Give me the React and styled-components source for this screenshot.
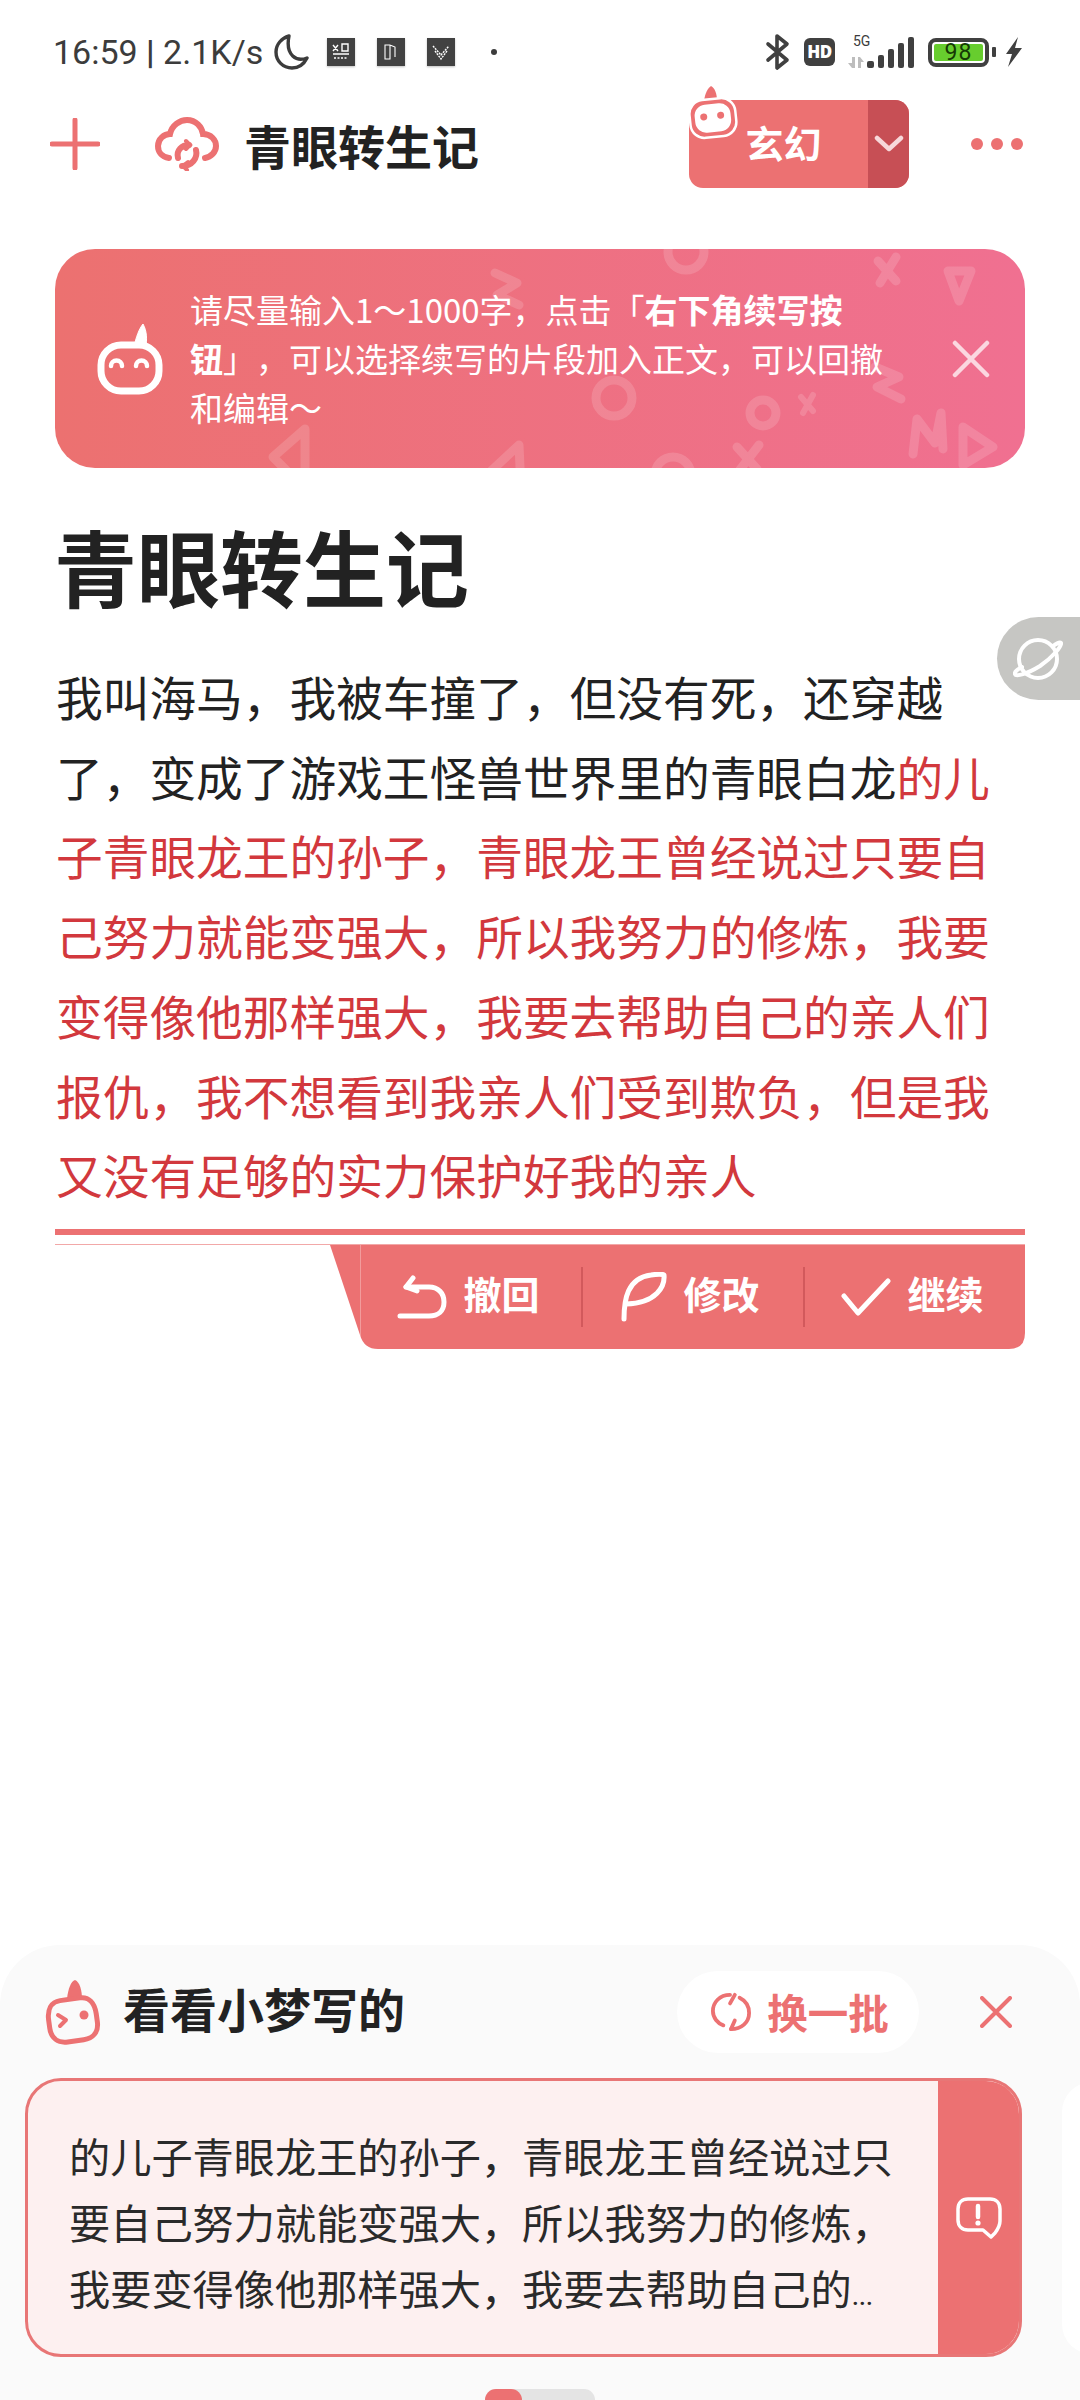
import React from 'react';
import styled, { createGlobalStyle } from 'styled-components';

const coral = '#ec7172';
const sans = '"Noto Sans CJK SC", "Noto Sans", sans-serif';

const GlobalStyle = createGlobalStyle`
    html, body { margin: 0; padding: 0; background: #fff; }
    body { font-family: ${sans}; color: #222; text-spacing-trim: space-all; }
`;

const Page = styled.div`
    position: relative;
    width: 1080px;
    height: 2400px;
    display: flex;
    flex-direction: column;
    overflow: hidden;
    background: #fff;
`;

/* status bar */
const StatusBar = styled.div`
    height: 96px;
    padding: 4px 57px 0 53px;
    display: flex;
    align-items: center;
    color: #3c3c3c;
`;
const Clock = styled.span`
    font: 400 34px/1 Roboto, sans-serif;
    white-space: nowrap;
    b { font-weight: 700; }
`;
const MoonWrap = styled.div`
    width: 36px;
    height: 36px;
    margin-left: 10px;
`;
const NotifyGroup = styled.div`
    display: flex;
    align-items: center;
    gap: 22px;
    margin-left: 18px;
`;
const NotifyIcon = styled.div`
    width: 28px;
    height: 28px;
    background: #424242;
    box-shadow: 0 1px 2px rgba(0, 0, 0, 0.25);
    display: flex;
    align-items: center;
    justify-content: center;
`;
const NotifyDot = styled.div`
    width: 6px;
    height: 6px;
    border-radius: 50%;
    background: #3c3c3c;
    margin-left: 14px;
`;
const SystemGroup = styled.div`
    margin-left: auto;
    display: flex;
    align-items: center;
`;
const HdBadge = styled.div`
    width: 31px;
    height: 28px;
    margin-left: 13px;
    border-radius: 6px;
    background: #404040;
    color: #fff;
    font: 800 17px/28px "Open Sans", sans-serif;
    text-align: center;
    letter-spacing: -0.5px;
`;
const SignalWrap = styled.div`
    position: relative;
    width: 68px;
    height: 34px;
    margin-left: 12px;
`;
const FiveG = styled.span`
    position: absolute;
    left: 6px;
    top: -1px;
    font: 400 14px/14px Roboto, sans-serif;
    color: #3c3c3c;
`;
const Battery = styled.div`
    width: 61px;
    height: 29px;
    margin-left: 13px;
    box-sizing: border-box;
    border: 4px solid #404040;
    border-radius: 8px;
    padding: 2px;
    display: flex;
`;
const BatteryFill = styled.div`
    flex: 1;
    border-radius: 2px;
    background: #67cd2e;
    color: #163a05;
    font: 400 23px/17px Roboto, sans-serif;
    text-align: center;
    letter-spacing: 1px;
`;
const BatteryTip = styled.div`
    width: 4px;
    height: 10px;
    margin-left: 3px;
    border-radius: 1px;
    background: #404040;
`;
const BoltWrap = styled.div`
    width: 18px;
    height: 30px;
    margin-left: 9px;
`;

/* top bar */
const Header = styled.div`
    height: 88px;
    display: flex;
    align-items: center;
    padding-left: 50px;
    padding-right: 57px;
`;
const CloudWrap = styled.div`
    width: 64px;
    height: 54px;
    margin-left: 55px;
`;
const DocName = styled.h2`
    margin: 0 0 0 25px;
    font: 700 47px/1 ${sans};
    color: #222;
    white-space: nowrap;
`;
const GenreButton = styled.div`
    position: relative;
    width: 220px;
    height: 88px;
    margin-left: auto;
    border-radius: 14px;
    background: ${coral};
    display: flex;
`;
const GenreLabel = styled.div`
    flex: 1;
    padding-left: 10px;
    color: #fff;
    font: 700 38px/84px ${sans};
    text-align: center;
`;
const GenreArrow = styled.div`
    width: 41px;
    background: #c74f55;
    border-radius: 0 14px 14px 0;
    display: flex;
    align-items: center;
    justify-content: center;
`;
const GenreBot = styled.div`
    position: absolute;
    left: -1px;
    top: -15px;
    width: 50px;
    height: 56px;
`;
const MoreDots = styled.div`
    display: flex;
    gap: 8px;
    margin-left: 62px;
`;
const MoreDot = styled.span`
    width: 12px;
    height: 12px;
    border-radius: 50%;
    background: ${coral};
`;

/* tip banner */
const Banner = styled.div`
    position: relative;
    height: 219px;
    margin: 61px 55px 0;
    border-radius: 40px;
    overflow: hidden;
    background: linear-gradient(90deg, #ec7170 0%, #f07091 100%);
    display: flex;
    align-items: center;
`;
const BannerDecor = styled.svg`
    position: absolute;
    inset: 0;
`;
const BannerBot = styled.div`
    position: relative;
    width: 66px;
    height: 72px;
    margin: 0 0 0 42px;
    flex: none;
`;
const BannerText = styled.p`
    position: relative;
    width: 704px;
    margin: 0 0 0 27px;
    color: #fff;
    font: 400 33px/49px ${sans};
    strong { font-weight: 700; }
`;
const BannerClose = styled.div`
    position: relative;
    width: 38px;
    height: 38px;
    margin-left: 58px;
`;

/* document */
const DocTitle = styled.h1`
    margin: 47px 0 0 54px;
    font: 700 83px/100px ${sans};
    color: #222;
`;
const Body = styled.p`
    width: 970px;
    margin: 41px 0 0 56px;
    font: 400 46.7px/79.7px ${sans};
    color: #222;
`;
const Generated = styled.span`
    color: #d2383d;
`;
const ThickRule = styled.div`
    height: 6px;
    margin: 15px 55px 0;
    background: ${coral};
`;
const ThinRule = styled.div`
    height: 1px;
    margin: 9px 55px 0;
    background: #f2a8a8;
`;
const Toolbar = styled.div`
    width: 695px;
    height: 104px;
    margin: 0 55px 0 auto;
    padding-left: 30px;
    box-sizing: border-box;
    background: ${coral};
    clip-path: path('M0 0H695V88Q695 104 679 104H48Q34 104 30 90Z');
    display: flex;
    align-items: center;
`;
const ToolbarInner = styled.div`
    flex: 1;
    height: 100%;
    border-left: 1px solid rgba(255, 255, 255, 0.3);
    display: flex;
    align-items: center;
`;
const ToolButton = styled.div`
    flex: 1;
    display: flex;
    align-items: center;
    justify-content: center;
    gap: 16px;
    padding-right: 5px;
    color: #fff;
`;
const ToolLabel = styled.span`
    font: 700 38px/1 ${sans};
    margin-bottom: 8px;
`;
const ToolDivider = styled.div`
    width: 2px;
    height: 60px;
    background: rgba(190, 70, 75, 0.55);
`;

/* planet tab */
const PlanetTab = styled.div`
    position: absolute;
    right: 0;
    top: 617px;
    width: 83px;
    height: 83px;
    border-radius: 42px 0 0 42px;
    background: #c6c6c3;
    display: flex;
    align-items: center;
    padding-left: 16px;
    box-sizing: border-box;
`;

/* bottom sheet */
const Sheet = styled.div`
    margin-top: auto;
    height: 455px;
    flex: none;
    box-sizing: border-box;
    border-radius: 60px 60px 0 0;
    background: #fafafa;
    padding-top: 26px;
    overflow: hidden;
    display: flex;
    flex-direction: column;
`;
const SheetHeader = styled.div`
    height: 82px;
    flex: none;
    display: flex;
    align-items: center;
    padding: 0 68px 0 45px;
`;
const SheetTitle = styled.h3`
    margin: 0 0 10px 22px;
    font: 700 47px/1 ${sans};
    color: #222;
`;
const BatchPill = styled.div`
    width: 242px;
    height: 82px;
    margin-left: auto;
    border-radius: 41px;
    background: #fff;
    display: flex;
    align-items: center;
    justify-content: center;
    gap: 16px;
    padding-left: 4px;
    box-sizing: border-box;
    color: ${coral};
    font: 700 40.5px/1 ${sans};
`;
const SheetClose = styled.div`
    width: 32px;
    height: 32px;
    margin-left: 61px;
`;
const CardRow = styled.div`
    flex: none;
    display: flex;
    gap: 40px;
    margin-top: 25px;
    padding-left: 25px;
    align-items: center;
    overflow: hidden;
`;
const Card = styled.div`
    flex: none;
    width: 997px;
    height: 279px;
    box-sizing: border-box;
    border: 3px solid #e87676;
    border-radius: 36px;
    background: #fdf0f0;
    overflow: hidden;
    display: flex;
`;
const CardText = styled.p`
    flex: 1;
    margin: 0;
    padding: 41px 24px 0 41px;
    font: 400 41.2px/66px ${sans};
    color: #2a2a2a;
`;
const Dots = styled.span`
    font: 400 30px/1 Roboto, sans-serif;
    letter-spacing: -1px;
`;
const CardSide = styled.div`
    flex: none;
    width: 81px;
    background: ${coral};
    display: flex;
    align-items: center;
    justify-content: center;
`;
const NextCard = styled.div`
    flex: none;
    width: 200px;
    height: 272px;
    border-radius: 30px;
    background: #fff;
`;
const Pager = styled.div`
    flex: none;
    width: 110px;
    height: 22px;
    margin: 32px auto 0;
    border-radius: 11px;
    background: #e4e4e4;
`;
const PagerThumb = styled.div`
    width: 37px;
    height: 100%;
    border-radius: 11px;
    background: ${coral};
`;

function PlusIcon() {
    return (
        <svg width="50" height="52" viewBox="0 0 50 52" fill="none" stroke={coral} strokeWidth="5" strokeLinecap="round">
            <path d="M25 2V50M2 26H48" />
        </svg>
    );
}

function CloudIcon() {
    return (
        <svg width="64" height="54" viewBox="0 0 64 54" fill="none" stroke={coral} strokeWidth="6" strokeLinecap="round">
            <path d="M14 41C6 40 3 34 3 29C3 22 9 17 15 17C17 8 25 3 32 3C41 3 47 10 48 17C56 17 61 23 61 29C61 35 56 40 50 41" />
            <path d="M23 41C21 33 27 28 34 28" />
            <path d="M41 33C43 41 37 49 27 49" />
            <path d="M31 24L35 28L31 32M33 45L28 49L32 53" strokeWidth="4" />
        </svg>
    );
}

function BannerDecorations() {
    const mark = { fill: 'none', stroke: 'rgba(255,255,255,0.15)', strokeLinecap: 'round', strokeLinejoin: 'round' };
    return (
        <BannerDecor width="970" height="219" viewBox="0 0 970 219">
            <g {...mark} strokeWidth="9">
                <circle cx="631" cy="3" r="18" />
                <path d="M823 12L841 32M841 8L825 34" />
                <path d="M893 22H916L904 52Z" />
                <path d="M440 24L462 34L442 46L464 56" />
                <path d="M820 118L844 128L822 138L846 150" />
                <circle cx="559" cy="149" r="18" />
                <circle cx="708" cy="164" r="13" />
                <path d="M746 148L758 162M758 146L748 164" strokeWidth="6" />
                <path d="M858 205L862 170L880 194L886 164L888 200" />
                <path d="M908 178L938 198L908 216Z" />
                <path d="M250 180L218 208L250 240Z" />
                <path d="M464 196L436 222L466 240Z" />
                <circle cx="618" cy="226" r="18" />
                <path d="M682 198L702 220M704 196L684 222" />
            </g>
        </BannerDecor>
    );
}

function HappyBot() {
    return (
        <svg width="66" height="72" viewBox="0 0 66 72" fill="none" stroke="#fff" strokeLinecap="round">
            <path d="M37 24C39 14 42 6 46 1C50 8 50 16 49 24Z" fill="#fff" strokeWidth="1" />
            <rect x="4" y="22" width="58" height="46" rx="20" strokeWidth="7" />
            <path d="M14 43A5.5 5.5 0 0 1 25 43M39 43A5.5 5.5 0 0 1 50 43" strokeWidth="4.5" />
        </svg>
    );
}

function GenreBotIcon() {
    return (
        <svg width="50" height="56" viewBox="0 0 50 56" style={{ display: 'block' }}>
            <path d="M16 16C17 8 20 3 23 1C27 3 29 9 29 16Z" fill={coral} />
            <g transform="rotate(-6 25 34)">
                <rect x="2" y="14" width="46" height="38" rx="14" fill={coral} stroke="#fff" strokeWidth="2.5" />
                <rect x="7" y="19" width="36" height="28" rx="11" fill="#fff" />
                <circle cx="16" cy="31" r="3.5" fill={coral} />
                <circle cx="33" cy="31" r="3.5" fill={coral} />
            </g>
        </svg>
    );
}

function WinkBot() {
    return (
        <svg width="56" height="66" viewBox="0 0 56 66" fill="none" stroke={coral} strokeLinecap="round" strokeLinejoin="round" style={{ flex: 'none' }}>
            <path d="M22 20C23 10 26 2 30 1C35 3 37 12 37 20Z" fill={coral} stroke="none" />
            <path transform="rotate(-8 28 42)" d="M18 20H38C47 20 52 27 52 38V46C52 57 45 62 36 62H20C10 62 4 56 4 46V38C4 27 9 20 18 20Z" strokeWidth="5" />
            <path d="M13 36L21 41L15 47" strokeWidth="4" />
            <circle cx="39" cy="36" r="4.5" fill={coral} stroke="none" />
        </svg>
    );
}

function App() {
    return (
        <Page>
            <GlobalStyle />
            <StatusBar>
                <Clock>16:59 <b>|</b> 2.1K/s</Clock>
                <MoonWrap>
                    <svg width="36" height="36" viewBox="0 0 36 36" fill="none" stroke="#3c3c3c" strokeWidth="3.4">
                        <path d="M16 2C9 4 3 10 3 18C3 27 10 34 19 34C26 34 31 30 34 24C24 28 12 22 16 2Z" strokeLinejoin="round" />
                    </svg>
                </MoonWrap>
                <NotifyGroup>
                    <NotifyIcon>
                        <svg width="20" height="20" viewBox="0 0 20 20" fill="none" stroke="#fff" strokeWidth="1.4">
                            <path d="M2 3L7 9M7 3L2 9M11 2H17V9H11ZM2 12H18" />
                            <path d="M3 16H17" strokeDasharray="2 1.5" />
                        </svg>
                    </NotifyIcon>
                    <NotifyIcon>
                        <svg width="20" height="20" viewBox="0 0 20 20" fill="none" stroke="#fff" strokeWidth="1.1">
                            <path d="M4 3H9V17H4ZM9 3L14 5V15" />
                        </svg>
                    </NotifyIcon>
                    <NotifyIcon>
                        <svg width="20" height="20" viewBox="0 0 20 20" fill="none" stroke="#fff" strokeWidth="1.4" strokeDasharray="2 1">
                            <path d="M2 4L10 13L18 4M4 9L10 17L16 9" />
                        </svg>
                    </NotifyIcon>
                    <NotifyDot />
                </NotifyGroup>
                <SystemGroup>
                    <svg width="26" height="38" viewBox="0 0 26 38" fill="none" stroke="#404040" strokeWidth="3.6" strokeLinecap="round" strokeLinejoin="round">
                        <path d="M3 11L22 27L12 35V3L22 11L3 27" />
                    </svg>
                    <HdBadge>HD</HdBadge>
                    <SignalWrap>
                        <FiveG>5G</FiveG>
                        <svg width="68" height="34" viewBox="0 0 68 34" style={{ display: 'block' }}>
                            <path d="M5 22H8V33H5L1 28H5ZM11 33V22H13L17 27H14V33Z" fill="#bdbdbd" />
                            <rect x="20" y="26" width="7" height="7" rx="2" fill="#404040" />
                            <rect x="31" y="20" width="6" height="13" rx="2" fill="#404040" />
                            <rect x="41" y="14" width="6" height="19" rx="2" fill="#404040" />
                            <rect x="51" y="8" width="6" height="25" rx="2" fill="#404040" />
                            <rect x="61" y="2" width="6" height="31" rx="2" fill="#404040" />
                        </svg>
                    </SignalWrap>
                    <Battery><BatteryFill>98</BatteryFill></Battery>
                    <BatteryTip />
                    <BoltWrap>
                        <svg width="18" height="30" viewBox="0 0 18 30" fill="#404040">
                            <path d="M13 0L1 17H7L3 30L17 11H10Z" />
                        </svg>
                    </BoltWrap>
                </SystemGroup>
            </StatusBar>

            <Header>
                <PlusIcon />
                <CloudWrap><CloudIcon /></CloudWrap>
                <DocName>青眼转生记</DocName>
                <GenreButton>
                    <GenreBot><GenreBotIcon /></GenreBot>
                    <GenreLabel>玄幻</GenreLabel>
                    <GenreArrow>
                        <svg width="30" height="18" viewBox="0 0 30 18" fill="none" stroke="#f7d8da" strokeWidth="4.5" strokeLinecap="round" strokeLinejoin="round">
                            <path d="M3 3L15 14L27 3" />
                        </svg>
                    </GenreArrow>
                </GenreButton>
                <MoreDots><MoreDot /><MoreDot /><MoreDot /></MoreDots>
            </Header>

            <Banner>
                <BannerDecorations />
                <BannerBot><HappyBot /></BannerBot>
                <BannerText>请尽量输入1～1000字，点击「<strong>右下角续写按钮</strong>」，可以选择续写的片段加入正文，可以回撤和编辑～</BannerText>
                <BannerClose>
                    <svg width="38" height="38" viewBox="0 0 38 38" fill="none" stroke="rgba(255,255,255,0.72)" strokeWidth="4.5" strokeLinecap="round">
                        <path d="M3 3L35 35M35 3L3 35" />
                    </svg>
                </BannerClose>
            </Banner>

            <DocTitle>青眼转生记</DocTitle>
            <Body>
                我叫海马，我被车撞了，但没有死，还穿越了，变成了游戏王怪兽世界里的青眼白龙
                <Generated>的儿子青眼龙王的孙子，青眼龙王曾经说过只要自己努力就能变强大，所以我努力的修炼，我要变得像他那样强大，我要去帮助自己的亲人们报仇，我不想看到我亲人们受到欺负，但是我又没有足够的实力保护好我的亲人</Generated>
            </Body>
            <ThickRule />
            <ThinRule />
            <Toolbar>
                <ToolbarInner>
                    <ToolButton>
                        <svg width="50" height="44" viewBox="0 0 50 44" fill="none" stroke="#fff" strokeWidth="5" strokeLinecap="round" strokeLinejoin="round">
                            <path d="M16 3L9 12L20 16" />
                            <path d="M9 12H32C41 12 47 18 47 27C47 36 41 41 32 41H3" />
                        </svg>
                        <ToolLabel>撤回</ToolLabel>
                    </ToolButton>
                    <ToolDivider />
                    <ToolButton>
                        <svg width="46" height="50" viewBox="0 0 46 50" fill="none" stroke="#fff" strokeWidth="5" strokeLinecap="round" strokeLinejoin="round">
                            <path d="M3 47C3 28 6 6 30 3C36 2 42 2 43 3C44 14 36 31 5 32" />
                        </svg>
                        <ToolLabel>修改</ToolLabel>
                    </ToolButton>
                    <ToolDivider />
                    <ToolButton>
                        <svg width="50" height="38" viewBox="0 0 50 38" fill="none" stroke="#fff" strokeWidth="5" strokeLinecap="round" strokeLinejoin="round">
                            <path d="M3 18L17 35L47 3" />
                        </svg>
                        <ToolLabel>继续</ToolLabel>
                    </ToolButton>
                </ToolbarInner>
            </Toolbar>

            <PlanetTab>
                <svg width="50" height="46" viewBox="0 0 50 46" fill="none" stroke="#fff" strokeWidth="4" strokeLinecap="round">
                    <circle cx="25" cy="23" r="19" />
                    <path d="M40 10C44 7 47 6 48 7C49 10 40 21 27 30C14 38 3 41 2 38C1 36 5 33 9 31" />
                </svg>
            </PlanetTab>

            <Sheet>
                <SheetHeader>
                    <WinkBot />
                    <SheetTitle>看看小梦写的</SheetTitle>
                    <BatchPill>
                        <svg width="40" height="40" viewBox="0 0 42 42" fill="none" stroke={coral} strokeWidth="4" strokeLinecap="round">
                            <path d="M20 3C9 3 2 11 2 20C2 27 7 33 13 35" />
                            <path d="M25 3L20 12" />
                            <path d="M30 6C36 9 40 15 40 22C40 32 32 39 21 39" />
                            <path d="M21 39L25 30" />
                        </svg>
                        换一批
                    </BatchPill>
                    <SheetClose>
                        <svg width="32" height="32" viewBox="0 0 32 32" fill="none" stroke={coral} strokeWidth="4" strokeLinecap="round">
                            <path d="M2 2L30 30M30 2L2 30" />
                        </svg>
                    </SheetClose>
                </SheetHeader>
                <CardRow>
                    <Card>
                        <CardText>的儿子青眼龙王的孙子，青眼龙王曾经说过只要自己努力就能变强大，所以我努力的修炼，我要变得像他那样强大，我要去帮助自己的<Dots>...</Dots></CardText>
                        <CardSide>
                            <svg width="46" height="42" viewBox="0 0 46 42" fill="none" stroke="#fff" strokeWidth="3.5" strokeLinejoin="round">
                                <path d="M12 2H34C40 2 44 6 44 12V24C44 28 42 32 39 36L35 40L27 33H12C6 33 2 29 2 23V12C2 6 6 2 12 2Z" />
                                <path d="M22 9V20" strokeWidth="4.5" strokeLinecap="round" />
                                <circle cx="22" cy="26" r="2.6" fill="#fff" stroke="none" />
                            </svg>
                        </CardSide>
                    </Card>
                    <NextCard />
                </CardRow>
                <Pager><PagerThumb /></Pager>
            </Sheet>
        </Page>
    );
}

export default App;
